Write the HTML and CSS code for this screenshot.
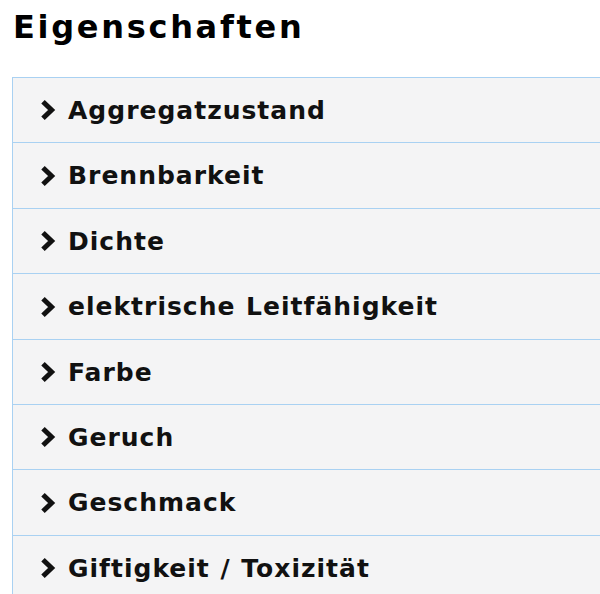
FILE: index.html
```html
<!DOCTYPE html>
<html lang="de">
  <head>
    <meta charset="UTF-8" />
    <meta name="viewport" content="width=device-width, initial-scale=1.0" />
    <title>Eigenschaften</title>
    <link rel="stylesheet" href="styles.css">
  </head>
  <body>
    <!-- Section title -->
    <h1 class="title">Eigenschaften</h1>

    <!-- Property list -->
    <ul class="props">
      <li class="prop"><span class="chevron"><svg viewBox="0 0 16 22" width="16" height="22"><path d="M3 2.8 L11.6 11 L3 19.2" fill="none" stroke="#111" stroke-width="5" stroke-linejoin="miter"/></svg></span>Aggregatzustand</li>
      <li class="prop"><span class="chevron"><svg viewBox="0 0 16 22" width="16" height="22"><path d="M3 2.8 L11.6 11 L3 19.2" fill="none" stroke="#111" stroke-width="5" stroke-linejoin="miter"/></svg></span>Brennbarkeit</li>
      <li class="prop"><span class="chevron"><svg viewBox="0 0 16 22" width="16" height="22"><path d="M3 2.8 L11.6 11 L3 19.2" fill="none" stroke="#111" stroke-width="5" stroke-linejoin="miter"/></svg></span>Dichte</li>
      <li class="prop"><span class="chevron"><svg viewBox="0 0 16 22" width="16" height="22"><path d="M3 2.8 L11.6 11 L3 19.2" fill="none" stroke="#111" stroke-width="5" stroke-linejoin="miter"/></svg></span>elektrische Leitfähigkeit</li>
      <li class="prop"><span class="chevron"><svg viewBox="0 0 16 22" width="16" height="22"><path d="M3 2.8 L11.6 11 L3 19.2" fill="none" stroke="#111" stroke-width="5" stroke-linejoin="miter"/></svg></span>Farbe</li>
      <li class="prop"><span class="chevron"><svg viewBox="0 0 16 22" width="16" height="22"><path d="M3 2.8 L11.6 11 L3 19.2" fill="none" stroke="#111" stroke-width="5" stroke-linejoin="miter"/></svg></span>Geruch</li>
      <li class="prop"><span class="chevron"><svg viewBox="0 0 16 22" width="16" height="22"><path d="M3 2.8 L11.6 11 L3 19.2" fill="none" stroke="#111" stroke-width="5" stroke-linejoin="miter"/></svg></span>Geschmack</li>
      <li class="prop"><span class="chevron"><svg viewBox="0 0 16 22" width="16" height="22"><path d="M3 2.8 L11.6 11 L3 19.2" fill="none" stroke="#111" stroke-width="5" stroke-linejoin="miter"/></svg></span>Giftigkeit / Toxizität</li>
    </ul>
  </body>
</html>
```

FILE: styles.css
```css
/* Whole page */
body {
  font-family: "DejaVu Sans", Verdana, sans-serif;
  background-color: #fff;
  margin: 0;
  padding: 0;
  overflow: hidden;
}

/* Section title */
.title {
  margin: 0;
  padding: 8px 0 0 13px;
  font-size: 32px;
  font-weight: bold;
  letter-spacing: 2.7px;
  line-height: 38px;
  color: #000;
}

/* Property list */
.props {
  list-style: none;
  margin: 31px 0 0 12px;
  padding: 0;
  width: 640px;
  border-left: 1px solid #a9d1f2;
  background-color: #f4f4f5;
}

/* One property row */
.prop {
  display: flex;
  align-items: center;
  height: 64px;
  padding-left: 27px;
  border-top: 1px solid #a9d1f2;
  font-size: 25px;
  font-weight: bold;
  letter-spacing: 1px;
  word-spacing: 1px;
  color: #111;
}
/* A few rows are one pixel taller */
.prop:nth-child(2),
.prop:nth-child(4),
.prop:nth-child(7) {
  height: 65px;
}

/* Chevron icon */
.chevron {
  display: flex;
  margin-right: 12px;
}
```
